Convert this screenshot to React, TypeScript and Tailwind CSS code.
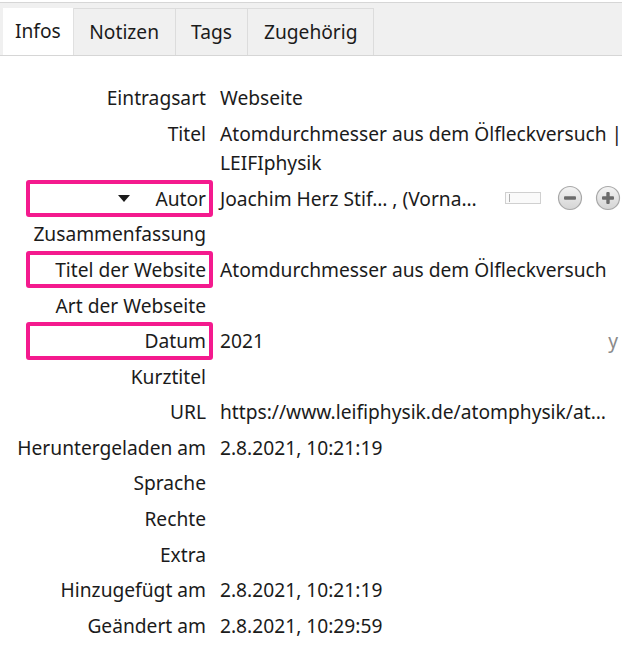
import React from 'react';

const font = { fontFamily: '"Noto Sans", "Open Sans", sans-serif' };

type Row = { label: string; value?: React.ReactNode; mark?: boolean };

function RoundBtn({ plus }: { plus?: boolean }) {
    return (
        <svg width="26" height="26" viewBox="0 0 26 26">
            <defs>
                <linearGradient id={plus ? 'gp' : 'gm'} x1="0" y1="0" x2="0" y2="1">
                    <stop offset="0" stopColor="#f4f4f4" />
                    <stop offset="1" stopColor="#d4d4d4" />
                </linearGradient>
            </defs>
            <circle cx="13" cy="13" r="11.5" fill={`url(#${plus ? 'gp' : 'gm'})`} stroke="#a8a8a8" strokeWidth="1.2" />
            <rect x="7" y="11.3" width="12" height="3.4" rx="1" fill="#6b6b6b" />
            {plus && <rect x="11.3" y="7" width="3.4" height="12" rx="1" fill="#6b6b6b" />}
        </svg>
    );
}

const rows: Row[] = [
    { label: 'Eintragsart', value: 'Webseite' },
    { label: 'Titel', value: <>Atomdurchmesser aus dem Ölfleckversuch |<br />LEIFIphysik</> },
    {
        label: 'Autor',
        mark: true,
        value: (
            <div className="flex h-[29.5px] items-center">
                <span className="w-[276px] whitespace-nowrap">Joachim Herz Stif… , (Vorna…</span>
                <div className="ml-[9px] flex h-[12px] w-[36px] items-center border border-[#d0d0d0] bg-[#fafafa] pl-[3px]">
                    <div className="h-[8px] w-px bg-[#b0b0b0]" />
                </div>
                <div className="ml-[16px] flex">
                    <RoundBtn />
                </div>
                <div className="ml-[12px] flex">
                    <RoundBtn plus />
                </div>
            </div>
        ),
    },
    { label: 'Zusammenfassung' },
    { label: 'Titel der Website', mark: true, value: 'Atomdurchmesser aus dem Ölfleckversuch' },
    { label: 'Art der Webseite' },
    {
        label: 'Datum',
        mark: true,
        value: (
            <div className="flex justify-between pr-[4px]">
                <span>2021</span>
                <span className="text-[#8a8a8a]">y</span>
            </div>
        ),
    },
    { label: 'Kurztitel' },
    { label: 'URL', value: 'https://www.leifiphysik.de/atomphysik/at…' },
    { label: 'Heruntergeladen am', value: '2.8.2021, 10:21:19' },
    { label: 'Sprache' },
    { label: 'Rechte' },
    { label: 'Extra' },
    { label: 'Hinzugefügt am', value: '2.8.2021, 10:21:19' },
    { label: 'Geändert am', value: '2.8.2021, 10:29:59' },
];

export default function App() {
    const tabs = ['Infos', 'Notizen', 'Tags', 'Zugehörig'];
    return (
        <div className="h-[646px] w-[622px] overflow-hidden bg-white text-[19.2px] text-[#1b1b1b]" style={font}>
            <div className="mt-[2px] flex h-[54px] items-end border-y border-[#d6d6d6] bg-[#f0f0f0] pl-[3px]">
                {tabs.map((t, i) => (
                    <div
                        key={t}
                        className={
                            i === 0
                                ? 'flex h-[47px] items-center border-r border-[#e0e0e0] bg-white px-[12px]'
                                : 'flex h-[47px] items-center border-r border-t border-[#dcdcdc] px-[15.5px]'
                        }
                    >
                        {t}
                    </div>
                ))}
            </div>

            <div className="pt-[24px]">
                {rows.map((r) => (
                    <div key={r.label} className="relative flex py-[3.05px] leading-[29.5px]">
                        <div className="flex w-[206px] shrink-0 items-start justify-end whitespace-nowrap">
                            {r.label === 'Autor' && (
                                <svg width="12" height="7" viewBox="0 0 12 7" className="mr-[25px] mt-[11px]">
                                    <path d="M0 0 L12 0 L6 7 Z" fill="#1b1b1b" />
                                </svg>
                            )}
                            <span>{r.label}</span>
                        </div>
                        <div className="ml-[14px] min-w-0 flex-1 whitespace-nowrap">{r.value}</div>
                        {r.mark && (
                            <div className="absolute bottom-[-1px] left-[26px] top-[-1px] w-[187px] rounded-[3px] border-4 border-[#f41a8e]" />
                        )}
                    </div>
                ))}
            </div>
        </div>
    );
}
